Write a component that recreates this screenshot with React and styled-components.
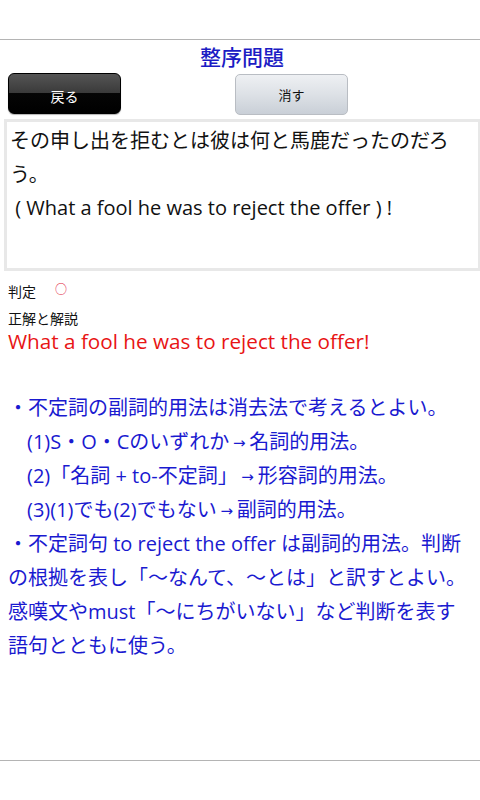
import React from "react";
import styled, { createGlobalStyle } from "styled-components";

const GlobalStyle = createGlobalStyle`
  body {
    margin: 0;
    background: #ffffff;
    font-family: "Open Sans", "Noto Sans CJK JP", sans-serif;
  }
`;

const Page = styled.div`
  width: 480px;
  min-height: 800px;
  display: flex;
  flex-direction: column;
  box-sizing: border-box;
  overflow: hidden;
`;

const TopBar = styled.div`
  height: 39px;
  border-bottom: 1px solid #b4b4b4;
`;

const Title = styled.h1`
  margin: 0;
  height: 33px;
  line-height: 34px;
  text-align: center;
  font-size: 21px;
  font-weight: 500;
  color: #1c1cc4;
  padding-left: 4px;
`;

const ButtonRow = styled.div`
  display: flex;
  align-items: flex-start;
  padding-left: 8px;
  gap: 114px;
  height: 46px;
`;

const BackButton = styled.button`
  width: 113px;
  height: 41px;
  border: 1px solid #000;
  border-radius: 6px;
  background: linear-gradient(
    to bottom,
    #555 0%,
    #3a3a3a 48%,
    #050505 50%,
    #000 100%
  );
  color: #fff;
  font-family: "Noto Sans CJK JP", sans-serif;
  font-size: 14px;
  padding: 4px 0 0;
  box-shadow: 0 1px 1px rgba(0, 0, 0, 0.3);
`;

const ClearButton = styled.button`
  margin-top: 1px;
  width: 113px;
  height: 41px;
  border: 1px solid #b9bdc3;
  border-radius: 5px;
  background: linear-gradient(to bottom, #eef0f3 0%, #dde1e6 50%, #c9cfd7 100%);
  color: #111;
  font-family: "Noto Sans CJK JP", sans-serif;
  font-size: 13px;
  padding: 0;
`;

const QuestionBox = styled.div`
  margin-left: 4px;
  width: 476px;
  height: 152px;
  box-sizing: border-box;
  border: 3px solid #e8e8e8;
  border-right-width: 2px;
  padding: 2px 3px;
  font-size: 20px;
  line-height: 33.5px;
  color: #111;
`;

const ResultRow = styled.div`
  display: flex;
  align-items: center;
  margin-top: 10px;
  padding-left: 8px;
  height: 20px;
  font-size: 14px;
  color: #111;
`;

const Mark = styled.span`
  margin-left: 19px;
  margin-top: -5px;
  font-size: 12px;
  color: #e0203a;
`;

const Label = styled.div`
  margin-top: 8px;
  padding-left: 8px;
  height: 20px;
  line-height: 20px;
  font-size: 14px;
  color: #111;
`;

const Answer = styled.div`
  padding-left: 8px;
  line-height: 24px;
  font-size: 20.7px;
  color: #e81414;
`;

const Explanation = styled.div`
  margin-top: 38px;
  padding-left: 8px;
  font-size: 20px;
  line-height: 34px;
  color: #1a1ad0;
`;

const Line = styled.div`
  height: 34px;
  white-space: nowrap;
  padding-left: ${(p) => (p.$indent ? "19px" : "0")};
`;

const Arrow = styled.span`
  display: inline-block;
  width: 20px;
  line-height: 20px;
  text-align: center;
  font-family: "DejaVu Sans", sans-serif;
  font-size: 15px;
  vertical-align: 1px;
`;

const Spacer = styled.div`
  flex: 1;
`;

const BottomBar = styled.div`
  height: 39px;
  border-top: 1px solid #b4b4b4;
`;

const lines = [
  { text: "・不定詞の副詞的用法は消去法で考えるとよい。" },
  { text: "(1)S・O・Cのいずれか→名詞的用法。", indent: true },
  { text: "(2)「名詞 + to-不定詞」→形容詞的用法。", indent: true },
  { text: "(3)(1)でも(2)でもない→副詞的用法。", indent: true },
  { text: "・不定詞句 to reject the offer は副詞的用法。判断" },
  { text: "の根拠を表し「〜なんて、〜とは」と訳すとよい。" },
  { text: "感嘆文やmust「〜にちがいない」など判断を表す" },
  { text: "語句とともに使う。" },
];

function withArrows(text) {
  const parts = text.split("→");
  return parts.map((part, i) => (
    <React.Fragment key={i}>
      {i > 0 && <Arrow>→</Arrow>}
      {part}
    </React.Fragment>
  ));
}

export default function App() {
  return (
    <Page>
      <GlobalStyle />
      <TopBar />
      <Title>整序問題</Title>
      <ButtonRow>
        <BackButton>戻る</BackButton>
        <ClearButton>消す</ClearButton>
      </ButtonRow>
      <QuestionBox>
        その申し出を拒むとは彼は何と馬鹿だったのだろう。
        <br />
        &nbsp;( What a fool he was to reject the offer ) !
      </QuestionBox>
      <ResultRow>
        判定<Mark>○</Mark>
      </ResultRow>
      <Label>正解と解説</Label>
      <Answer>What a fool he was to reject the offer!</Answer>
      <Explanation>
        {lines.map((l, i) => (
          <Line key={i} $indent={l.indent}>
            {withArrows(l.text)}
          </Line>
        ))}
      </Explanation>
      <Spacer />
      <BottomBar />
    </Page>
  );
}
